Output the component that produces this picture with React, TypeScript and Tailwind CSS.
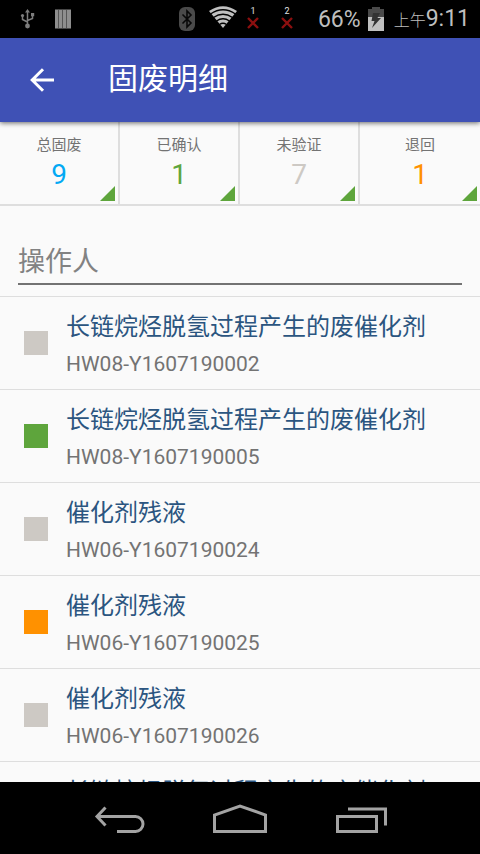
type Stat = { label: string; value: number; tone: string };
type Waste = { name: string; code: string; tone: string };

const stats: Stat[] = [
  { label: "总固废", value: 9, tone: "text-[#03a9f4]" },
  { label: "已确认", value: 1, tone: "text-[#5ea53c]" },
  { label: "未验证", value: 7, tone: "text-[#cdc9c4]" },
  { label: "退回", value: 1, tone: "text-[#ff9100]" },
];

const wastes: Waste[] = [
  { name: "长链烷烃脱氢过程产生的废催化剂", code: "HW08-Y1607190002", tone: "bg-[#cdc9c4]" },
  { name: "长链烷烃脱氢过程产生的废催化剂", code: "HW08-Y1607190005", tone: "bg-[#5ea53c]" },
  { name: "催化剂残液", code: "HW06-Y1607190024", tone: "bg-[#cdc9c4]" },
  { name: "催化剂残液", code: "HW06-Y1607190025", tone: "bg-[#ff9100]" },
  { name: "催化剂残液", code: "HW06-Y1607190026", tone: "bg-[#cdc9c4]" },
  { name: "长链烷烃脱氢过程产生的废催化剂", code: "", tone: "bg-[#cdc9c4]" },
];

function NoSignal({ sim }: { sim: number }) {
  return (
    <div className="flex w-4 flex-col items-center">
      <span className="text-[9px] leading-3 text-[#e0e0e0]">{sim}</span>
      <svg className="h-3 w-3" viewBox="0 0 12 12" stroke="#8c0f0f" strokeWidth="2.4" aria-hidden="true">
        <path d="M1 1L11 11M11 1L1 11" />
      </svg>
    </div>
  );
}

function StatusBar() {
  return (
    <div className="flex h-[38px] shrink-0 items-center bg-black pr-2.5 pl-5 text-[#bebebe]">
      <svg className="h-5 w-4" viewBox="0 0 16 20" fill="none" stroke="#7d7d7d" strokeWidth="1.5" aria-hidden="true">
        <path d="M7.500 17V2M7.500 13L2.500 10.500V7M7.500 11.500L12.500 9.500V6" />
        <circle cx="7.500" cy="17" r="2.400" fill="#7d7d7d" stroke="none" />
        <circle cx="2.500" cy="6.500" r="1.600" fill="#7d7d7d" stroke="none" />
        <path d="M7.500 0L10 3.500H5ZM11 4H14.200V7.200H11Z" fill="#7d7d7d" stroke="none" />
      </svg>
      <svg className="ml-[19px] h-5 w-4" viewBox="0 0 16 20" aria-hidden="true">
        <path d="M0 0.500H16V19.500H0Z" fill="#8e8e8e" />
        <path d="M3.500 1V19M7.500 1V19M11.500 1V19" stroke="#555" />
      </svg>
      <div className="flex-1" />
      <svg className="h-6 w-4" viewBox="0 0 16 24" aria-hidden="true">
        <rect width="16" height="24" rx="6" fill="#4a4a4a" />
        <path d="M3.500 7.500L12 16L8 20V4L12 8L3.500 16.500" fill="none" stroke="#080808" strokeWidth="1.600" />
      </svg>
      <svg className="mr-2 mb-1 ml-3.5 h-[22px] w-7" viewBox="0 0 28 22" aria-hidden="true">
        <path d="M14 22L0 5Q14 -4.500 28 5Z" fill="#c0c0c0" />
        <path d="M1.500 8Q14 -0.500 26.500 8M4.500 11.500Q14 5 23.500 11.500M7.500 15Q14 10.500 20.500 15M10.500 18.500Q14 16 17.500 18.500" fill="none" stroke="#000" strokeWidth="1.300" />
      </svg>
      <div className="mb-1 flex gap-[18px]">
        <NoSignal sim={1} />
        <NoSignal sim={2} />
      </div>
      <span className="mt-0.5 ml-[23px] text-[23px]">66%</span>
      <svg className="mr-2.5 ml-[7px] h-6 w-4" viewBox="0 0 16 24" aria-hidden="true">
        <path d="M4 0H12V2H16V10H0V2H4Z" fill="#4a4a4a" />
        <path d="M0 10H16V24H0Z" fill="#c0c0c0" />
        <path d="M5 6H12L9.500 11H13L4 21L6.500 14H3.500Z" fill="#333" />
      </svg>
      <div className="flex items-baseline font-light">
        <span className="text-base">上午</span>
        <span className="text-[23px] font-normal">9:11</span>
      </div>
    </div>
  );
}

function AppBar() {
  return (
    <header className="z-10 flex h-[84px] shrink-0 items-center bg-[#3f51b5] pl-7 text-white shadow-[0_1px_5px_rgba(0,0,0,0.6)]">
      <button type="button" aria-label="返回" className="p-0.5">
        <svg className="h-6 w-6" viewBox="0 0 24 24" fill="none" stroke="currentColor" strokeWidth="3" aria-hidden="true">
          <path d="M24 12H2.500M13 1.200L2.200 12L13 22.800" />
        </svg>
      </button>
      <h1 className="mb-0.5 ml-[52px] text-3xl">固废明细</h1>
    </header>
  );
}

function StatCell({ stat }: { stat: Stat }) {
  return (
    <button type="button" className="relative flex h-[82px] flex-col items-center border-r-2 border-[#dedede] pt-[13px] last:border-r-0">
      <span className="text-[15px] leading-5 text-[#737373]">{stat.label}</span>
      <span className={`mt-1 text-[28px] leading-8 ${stat.tone}`}>{stat.value}</span>
      <svg className="absolute right-[3px] bottom-[3px] h-[15px] w-[15px]" viewBox="0 0 15 15" aria-hidden="true">
        <path d="M15 0V15H0Z" fill="#5ea53c" />
      </svg>
    </button>
  );
}

function WasteRow({ waste }: { waste: Waste }) {
  return (
    <li className="flex h-[93px] shrink-0 items-center border-t border-[#dedede] pl-6">
      <span className={`h-6 w-6 shrink-0 ${waste.tone}`} />
      <div className="ml-[18px] min-w-0 pt-[3px]">
        <p className="truncate text-2xl leading-9 text-[#2b5580]">{waste.name}</p>
        <p className="mt-[3px] h-8 text-[21px] leading-8 text-[#737373]">{waste.code}</p>
      </div>
    </li>
  );
}

function NavBar() {
  return (
    <nav className="flex h-[72px] shrink-0 items-center justify-center gap-[66px] bg-black text-[#a3a3a3]">
      <button type="button" aria-label="后退">
        <svg className="h-8 w-14" viewBox="0 0 56 32" fill="none" stroke="currentColor" strokeWidth="3" aria-hidden="true">
          <path d="M6.500 14.500H45.500A7.500 7.500 0 0 1 45.500 29.500H27M15.500 5.500L7 14.500L15.500 23.500" />
        </svg>
      </button>
      <button type="button" aria-label="主屏幕">
        <svg className="h-8 w-14" viewBox="0 0 56 32" fill="none" stroke="currentColor" strokeWidth="3" aria-hidden="true">
          <path d="M2.500 29.500V13L28 4L53.500 13V29.500Z" />
        </svg>
      </button>
      <button type="button" aria-label="最近任务">
        <svg className="h-8 w-14" viewBox="0 0 56 32" fill="none" stroke="currentColor" strokeWidth="3" aria-hidden="true">
          <path d="M3.500 14.500H42.500V29.500H3.500ZM14 7H51.500V23.500" />
        </svg>
      </button>
    </nav>
  );
}

export default function App() {
  return (
    <div className="flex h-screen flex-col overflow-hidden bg-[#fafafa] font-[Roboto,'Noto_Sans_CJK_SC',sans-serif]">
      <StatusBar />
      <AppBar />
      <main className="flex min-h-0 flex-1 flex-col overflow-hidden">
        <section className="grid shrink-0 grid-cols-4 border-b-2 border-[#dedede]">
          {stats.map((stat) => (
            <StatCell key={stat.label} stat={stat} />
          ))}
        </section>
        <div className="shrink-0 px-[18px] pt-[30px] pb-[11px]">
          <input
            type="text"
            aria-label="操作人"
            placeholder="操作人"
            className="block h-[49px] w-full border-b-2 border-[#737373] bg-transparent pt-1 text-[27px] outline-none placeholder:text-[#828282]"
          />
        </div>
        <ul className="flex flex-col">
          {wastes.map((waste, index) => (
            <WasteRow key={index} waste={waste} />
          ))}
        </ul>
      </main>
      <NavBar />
    </div>
  );
}
